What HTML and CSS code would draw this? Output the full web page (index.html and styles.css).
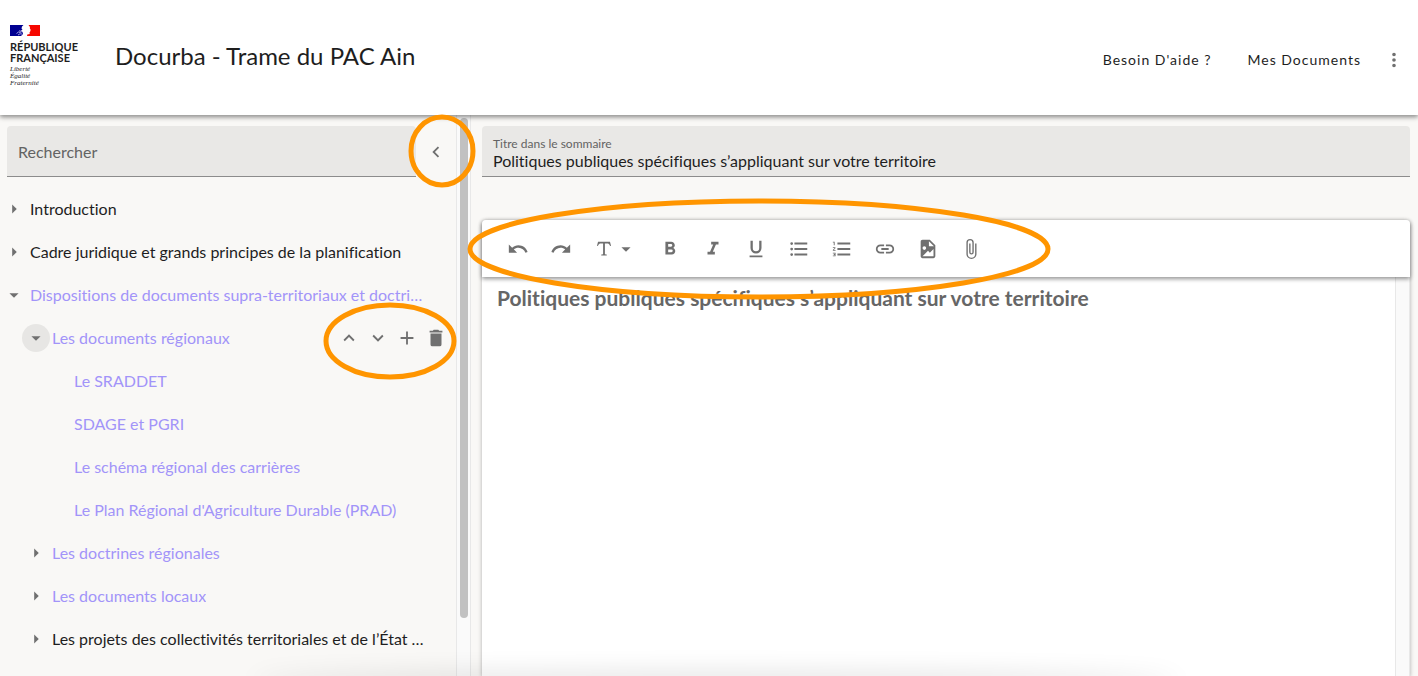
FILE: index.html
```html
<!DOCTYPE html>
<html lang="fr">
<head>
<meta charset="utf-8">
<title>Docurba - Trame du PAC Ain</title>
<link rel="stylesheet" href="styles.css">
</head>
<body>
<svg class="sprite" aria-hidden="true">
  <symbol id="down" viewBox="0 0 24 24"><path d="M7,10L12,15L17,10H7Z"/></symbol>
  <symbol id="right" viewBox="0 0 24 24"><path d="M10,17L15,12L10,7V17Z"/></symbol>
  <symbol id="chev-left" viewBox="0 0 24 24"><path d="M15.41,16.58L10.83,12L15.41,7.41L14,6L8,12L14,18L15.41,16.58Z"/></symbol>
  <symbol id="chev-up" viewBox="0 0 24 24"><path d="M7.41,15.41L12,10.83L16.59,15.41L18,14L12,8L6,14L7.41,15.41Z"/></symbol>
  <symbol id="chev-down" viewBox="0 0 24 24"><path d="M7.41,8.58L12,13.17L16.59,8.58L18,10L12,16L6,10L7.41,8.58Z"/></symbol>
  <symbol id="plus" viewBox="0 0 24 24"><path d="M19,13H13V19H11V13H5V11H11V5H13V11H19V13Z"/></symbol>
  <symbol id="trash" viewBox="0 0 24 24"><path d="M19,4H15.5L14.5,3H9.5L8.5,4H5V6H19M6,19A2,2 0 0,0 8,21H16A2,2 0 0,0 18,19V7H6V19Z"/></symbol>
</svg>

<header class="topbar">
  <a class="logo" href="#" aria-label="République Française">
    <svg class="flag" viewBox="0 0 30 11" aria-hidden="true">
      <path fill="#fff" d="M0 0h30v11H0z"/>
      <path fill="#000091" d="M0 0h13.500l-1.500 1.500-.5 2 1 1-1.500 1 1.500 1.500.5 2L11 11H0z"/>
      <path fill="#f60700" d="M18.500 0H30v11H17l.3-1.500 2.400-.5-.2-1.500.8-1-.2-.8.8-.5-1.100-1.900.2-1.300z"/>
      <path fill="none" stroke="#c4c4ee" stroke-width=".8" d="M6.500 8.500l2-1.500 1.500.5 2-1M8 10l2-1.200 2 .2M9 5.800l2 .4"/>
    </svg>
    <strong class="logo-name">RÉPUBLIQUE<br>FRANÇAISE</strong>
    <em class="logo-motto">Liberté<br>Égalité<br>Fraternité</em>
  </a>
  <h1 class="title">Docurba - Trame du PAC Ain</h1>
  <nav class="nav">
    <a href="#">Besoin D'aide ?</a>
    <a href="#">Mes Documents</a>
    <button class="icon-btn" aria-label="Menu"><svg class="icon" viewBox="0 0 24 24"><path d="M12,16A2,2 0 0,1 14,18A2,2 0 0,1 12,20A2,2 0 0,1 10,18A2,2 0 0,1 12,16M12,10A2,2 0 0,1 14,12A2,2 0 0,1 12,14A2,2 0 0,1 10,12A2,2 0 0,1 12,10M12,4A2,2 0 0,1 14,6A2,2 0 0,1 12,8A2,2 0 0,1 10,6A2,2 0 0,1 12,4Z"/></svg></button>
  </nav>
</header>

<div class="layout">
  <aside class="sidebar">
    <div class="search-row">
      <input class="search" type="text" placeholder="Rechercher" aria-label="Rechercher">
      <div class="collapse">
        <button class="icon-btn" aria-label="Replier"><svg class="icon"><use href="#chev-left"/></svg></button>
        <svg class="mark mark-collapse" viewBox="0 0 68 74" aria-hidden="true"><ellipse cx="34" cy="37" rx="31" ry="34"/></svg>
      </div>
    </div>
    <ul class="tree">
      <li class="node"><button class="toggle" aria-label="Ouvrir"><svg class="icon"><use href="#right"/></svg></button><a href="#">Introduction</a></li>
      <li class="node"><button class="toggle" aria-label="Ouvrir"><svg class="icon"><use href="#right"/></svg></button><a href="#">Cadre juridique et grands principes de la planification</a></li>
      <li class="node active"><button class="toggle" aria-label="Fermer"><svg class="icon"><use href="#down"/></svg></button><a href="#">Dispositions de documents supra-territoriaux et doctri…</a></li>
      <li class="node level-2 active"><button class="toggle focused" aria-label="Fermer"><svg class="icon"><use href="#down"/></svg></button><a href="#">Les documents régionaux</a>
        <div class="actions">
          <button class="icon-btn" aria-label="Monter"><svg class="icon"><use href="#chev-up"/></svg></button>
          <button class="icon-btn" aria-label="Descendre"><svg class="icon"><use href="#chev-down"/></svg></button>
          <button class="icon-btn" aria-label="Ajouter"><svg class="icon"><use href="#plus"/></svg></button>
          <button class="icon-btn" aria-label="Supprimer"><svg class="icon"><use href="#trash"/></svg></button>
          <svg class="mark mark-actions" viewBox="0 0 134 78" aria-hidden="true"><ellipse cx="67" cy="39" rx="64" ry="36"/></svg>
        </div>
      </li>
      <li class="node level-3 active"><a href="#">Le SRADDET</a></li>
      <li class="node level-3 active"><a href="#">SDAGE et PGRI</a></li>
      <li class="node level-3 active"><a href="#">Le schéma régional des carrières</a></li>
      <li class="node level-3 active"><a href="#">Le Plan Régional d'Agriculture Durable (PRAD)</a></li>
      <li class="node level-2 active"><button class="toggle" aria-label="Ouvrir"><svg class="icon"><use href="#right"/></svg></button><a href="#">Les doctrines régionales</a></li>
      <li class="node level-2 active"><button class="toggle" aria-label="Ouvrir"><svg class="icon"><use href="#right"/></svg></button><a href="#">Les documents locaux</a></li>
      <li class="node level-2"><button class="toggle" aria-label="Ouvrir"><svg class="icon"><use href="#right"/></svg></button><a href="#">Les projets des collectivités territoriales et de l’État …</a></li>
    </ul>
  </aside>
  <div class="scroll-track"><div class="scroll-thumb"></div></div>

  <main class="main">
    <div class="field">
      <label for="titre">Titre dans le sommaire</label>
      <input id="titre" type="text" value="Politiques publiques spécifiques s’appliquant sur votre territoire">
    </div>
    <section class="editor">
      <div class="toolbar">
        <button aria-label="Annuler"><svg class="icon" viewBox="0 0 24 24"><path d="M12.5,8C9.85,8 7.45,9 5.6,10.6L2,7V16H11L7.38,12.38C8.77,11.22 10.54,10.5 12.5,10.5C16.04,10.5 19.05,12.81 20.1,16L22.47,15.22C21.08,11.03 17.15,8 12.5,8Z"/></svg></button>
        <button aria-label="Rétablir"><svg class="icon" viewBox="0 0 24 24"><path d="M18.4,10.6C16.55,9 14.15,8 11.5,8C6.85,8 2.92,11.03 1.54,15.22L3.9,16C4.95,12.81 7.95,10.5 11.5,10.5C13.45,10.5 15.23,11.22 16.62,12.38L13,16H22V7L18.4,10.6Z"/></svg></button>
        <button class="wide" aria-label="Style de texte"><svg class="icon" viewBox="0 0 24 24"><path d="M18.5,4L19.66,8.35L18.7,8.61C18.25,7.74 17.79,6.87 17.26,6.43C16.73,6 16.11,6 15.5,6H13V16.5C13,17 13,17.5 13.33,17.75C13.67,18 14.33,18 15,18V19H9V18C9.67,18 10.33,18 10.67,17.75C11,17.5 11,17 11,16.5V6H8.5C7.89,6 7.27,6 6.74,6.43C6.21,6.87 5.75,7.74 5.3,8.61L4.34,8.35L5.5,4H18.5Z"/></svg><svg class="icon"><use href="#down"/></svg></button>
        <button aria-label="Gras"><svg class="icon" viewBox="0 0 24 24"><path d="M13.5,15.5H10V12.5H13.5A1.5,1.5 0 0,1 15,14A1.5,1.5 0 0,1 13.5,15.5M10,6.5H13A1.5,1.5 0 0,1 14.5,8A1.5,1.5 0 0,1 13,9.5H10M15.6,10.79C16.57,10.11 17.25,9 17.25,8C17.25,5.74 15.5,4 13.25,4H7V18H14.04C16.14,18 17.75,16.3 17.75,14.21C17.75,12.69 16.89,11.39 15.6,10.79Z"/></svg></button>
        <button aria-label="Italique"><svg class="icon" viewBox="0 0 24 24"><path d="M10,4V7H12.21L8.79,15H6V18H14V15H11.79L15.21,7H18V4H10Z"/></svg></button>
        <button aria-label="Souligné"><svg class="icon" viewBox="0 0 24 24"><path d="M5,21H19V19H5V21M12,17A6,6 0 0,0 18,11V3H15.5V11A3.5,3.5 0 0,1 12,14.5A3.5,3.5 0 0,1 8.5,11V3H6V11A6,6 0 0,0 12,17Z"/></svg></button>
        <button aria-label="Liste à puces"><svg class="icon" viewBox="0 0 24 24"><path d="M7,5H21V7H7V5M7,13V11H21V13H7M4,4.5A1.5,1.5 0 0,1 5.5,6A1.5,1.5 0 0,1 4,7.5A1.5,1.5 0 0,1 2.5,6A1.5,1.5 0 0,1 4,4.5M4,10.5A1.5,1.5 0 0,1 5.5,12A1.5,1.5 0 0,1 4,13.5A1.5,1.5 0 0,1 2.5,12A1.5,1.5 0 0,1 4,10.5M7,19V17H21V19H7M4,16.5A1.5,1.5 0 0,1 5.5,18A1.5,1.5 0 0,1 4,19.5A1.5,1.5 0 0,1 2.5,18A1.5,1.5 0 0,1 4,16.5Z"/></svg></button>
        <button aria-label="Liste numérotée"><svg class="icon" viewBox="0 0 24 24"><path d="M7,13V11H21V13H7M7,19V17H21V19H7M7,7V5H21V7H7M3,8V5H2V4H4V8H3M2,17V16H5V20H2V19H4V18.5H3V17.5H4V17H2M4.25,10A0.75,0.75 0 0,1 5,10.75C5,10.95 4.92,11.14 4.79,11.27L3.12,13H5V14H2V13.08L4,11H2V10H4.25Z"/></svg></button>
        <button aria-label="Lien"><svg class="icon" viewBox="0 0 24 24"><path d="M3.9,12C3.9,10.29 5.29,8.9 7,8.9H11V7H7A5,5 0 0,0 2,12A5,5 0 0,0 7,17H11V15.1H7C5.29,15.1 3.9,13.71 3.9,12M8,13H16V11H8V13M17,7H13V8.9H17C18.71,8.9 20.1,10.29 20.1,12C20.1,13.71 18.71,15.1 17,15.1H13V17H17A5,5 0 0,0 22,12A5,5 0 0,0 17,7Z"/></svg></button>
        <button aria-label="Image"><svg class="icon" viewBox="0 0 24 24"><path d="M13,9H18.5L13,3.5V9M6,2H14L20,8V20A2,2 0 0,1 18,22H6C4.89,22 4,21.1 4,20V4C4,2.89 4.89,2 6,2M6,20H15L18,20V12L14,16L12,14L6,20M8,9A2,2 0 0,0 6,11A2,2 0 0,0 8,13A2,2 0 0,0 10,11A2,2 0 0,0 8,9Z"/></svg></button>
        <button aria-label="Pièce jointe"><svg class="icon" viewBox="0 0 24 24"><path d="M16.5,6V17.5A4,4 0 0,1 12.5,21.5A4,4 0 0,1 8.5,17.5V5A2.5,2.5 0 0,1 11,2.5A2.5,2.5 0 0,1 13.5,5V15.5A1,1 0 0,1 12.5,16.5A1,1 0 0,1 11.5,15.5V6H10V15.5A2.5,2.5 0 0,0 12.5,18A2.5,2.5 0 0,0 15,15.5V5A4,4 0 0,0 11,1A4,4 0 0,0 7,5V17.5A5.5,5.5 0 0,0 12.5,23A5.5,5.5 0 0,0 18,17.5V6H16.5Z"/></svg></button>
        <svg class="mark mark-toolbar" viewBox="0 0 584 102" aria-hidden="true"><ellipse cx="292" cy="51" rx="289" ry="48"/></svg>
      </div>
      <div class="page">
        <div class="content"><h2>Politiques publiques spécifiques s’appliquant sur votre territoire</h2></div>
        <div class="page-track"></div>
      </div>
    </section>
  </main>
</div>
<div class="bottom-shade"></div>
</body>
</html>
```
FILE: styles.css
```css
* { box-sizing: border-box; }

body {
  margin: 0;
  height: 100vh;
  display: flex;
  flex-direction: column;
  position: relative;
  overflow: hidden;
  background: #f9f8f6;
  color: #1e1e1e;
  font: 16px/20px Lato, "Open Sans", sans-serif;
  font-variant-ligatures: none;
}

a { color: inherit; text-decoration: none; }
button { padding: 0; border: 0; background: none; color: inherit; font: inherit; cursor: pointer; }
.sprite { display: none; }
.icon { display: block; width: 22px; height: 22px; fill: #707070; }
.icon-btn { display: grid; place-items: center; }

.topbar {
  flex: none;
  display: flex;
  align-items: center;
  height: 115px;
  padding: 0 13px 3px 10px;
  background: #fff;
  box-shadow: 0 2px 4px rgba(0, 0, 0, .3), 0 2px 6px rgba(0, 0, 0, .2);
  z-index: 1;
}
.logo { width: 105px; }
.flag { display: block; width: 30px; height: 11px; }
.logo-name { display: block; margin-top: 5px; font: 700 11px/11px Lato, sans-serif; }
.logo-motto { display: block; margin-top: 3px; font: italic 7px/7px "Liberation Serif", serif; }
.title { margin: 0; font-size: 24px; line-height: 32px; font-weight: 400; }
.nav {
  display: flex;
  align-items: center;
  gap: 36px;
  margin: 8px 0 0 auto;
  font-size: 14px;
  letter-spacing: 1px;
}
.nav .icon-btn { width: 22px; margin-left: -14px; }

.layout { flex: 1; min-height: 0; display: flex; }
.sidebar { flex: 0 0 456px; min-width: 0; padding-top: 11px; }
.search-row { display: flex; padding-left: 7px; }
.search {
  flex: 1;
  min-width: 0;
  height: 51px;
  padding: 0 11px;
  border: 0;
  border-bottom: 1px solid #8c8c8c;
  border-radius: 4px 4px 0 0;
  background: #e9e8e6;
  font: inherit;
}
.search::placeholder { color: #636363; opacity: 1; }
.collapse { position: relative; display: grid; place-items: center; width: 40px; }

.mark { position: absolute; z-index: 2; overflow: visible; pointer-events: none; fill: none; stroke: #ff9500; stroke-width: 5px; }
.mark-collapse { width: 68px; height: 74px; left: -8px; top: -12px; }
.mark-actions { width: 134px; height: 78px; left: -15px; top: -25px; }
.mark-toolbar { width: 584px; height: 102px; left: -15px; top: -22px; }

.tree { margin: 0; padding: 10px 0 0; list-style: none; }
.node { display: flex; align-items: center; height: 43px; padding-right: 28px; }
.node > a { min-width: 0; overflow: hidden; text-overflow: ellipsis; white-space: nowrap; }
.toggle { flex: none; display: grid; place-items: center; width: 28px; height: 28px; margin-right: 2px; border-radius: 50%; }
.focused { background: #e7e6e4; }
.active { color: #a294f9; }
.level-2 { padding-left: 22px; }
.level-3 { padding-left: 74px; }
.actions { position: relative; display: flex; gap: 7px; margin: 0 -19px 0 auto; }

.scroll-track { flex: none; width: 15px; padding: 3px; border: 1px solid #e8e8e8; border-width: 0 1px; background: #fafafa; }
.scroll-thumb { width: 8px; height: 90%; border-radius: 4px; background: #c1c1c1; }

.main { flex: 1; min-width: 0; display: flex; flex-direction: column; padding: 11px 8px 0 11px; }
.field {
  display: flex;
  flex-direction: column;
  height: 51px;
  padding: 11px 11px 0;
  border-bottom: 1px solid #8c8c8c;
  border-radius: 4px 4px 0 0;
  background: #e9e8e6;
}
.field label { font-size: 12px; line-height: 14px; color: #636363; }
.field input { width: 100%; height: 20px; padding: 0; border: 0; background: none; color: inherit; font: inherit; }

.editor {
  flex: 1;
  min-height: 0;
  display: flex;
  flex-direction: column;
  margin-top: 43px;
  border-radius: 4px 4px 0 0;
  background: #fff;
  box-shadow: 0 1px 4px rgba(0, 0, 0, .3);
}
.toolbar {
  position: relative;
  flex: none;
  display: flex;
  align-items: center;
  height: 57px;
  padding-left: 14px;
  border-radius: 4px 4px 0 0;
  background: #fff;
  box-shadow: 0 2px 4px rgba(0, 0, 0, .3), 0 1px 5px rgba(0, 0, 0, .2);
}
.toolbar button { display: flex; justify-content: center; width: 43px; }
.toolbar .wide { width: 66px; }
.page { flex: 1; min-height: 0; display: flex; }
.content { flex: 1; min-width: 0; padding: 8px 15px; }
.content h2 { margin: 0; font-size: 21px; line-height: 26px; font-weight: 700; color: #666; }
.page-track { width: 15px; border: 1px solid #e8e8e8; border-width: 0 1px; background: #fafafa; }

.bottom-shade {
  position: absolute;
  z-index: 3;
  left: 18%;
  right: 17%;
  bottom: -10px;
  height: 10px;
  border-radius: 50%;
  box-shadow: 0 0 24px 4px rgba(0, 0, 0, .12);
}
```
